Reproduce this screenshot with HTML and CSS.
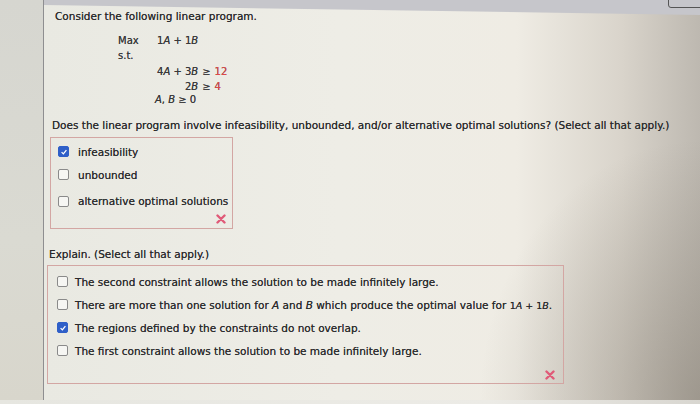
FILE: index.html
```html
<!DOCTYPE html>
<html>
<head>
<meta charset="utf-8">
<link rel="stylesheet" href="styles.css">
</head>
<body>
<div class="screen">
  <div class="side"></div>
  <div class="main">
    <div class="topbar"><div class="tab"></div></div>
    <div class="content">
      <p class="title">Consider the following linear program.</p>
      <div class="lp">
        <div class="lp-row"><span class="lp-label">Max</span><span class="expr">1<i>A</i> + 1<i>B</i></span></div>
        <div class="lp-row"><span class="lp-label">s.t.</span></div>
        <div class="cons">
          <span class="lhs">4<i>A</i> + 3<i>B</i></span><span class="rel">≥</span><span class="rhs">12</span>
          <span class="lhs">2<i>B</i></span><span class="rel">≥</span><span class="rhs">4</span>
        </div>
        <div class="nonneg"><i>A</i>, <i>B</i> ≥ 0</div>
      </div>
      <p class="question">Does the linear program involve infeasibility, unbounded, and/or alternative optimal solutions? (Select all that apply.)</p>
      <div class="box box1">
        <div class="opt"><span class="cb checked"><svg viewBox="0 0 10 10" width="8" height="8"><path d="M2 5.2 L4.2 7.3 L8 2.6" fill="none" stroke="#fff" stroke-width="1.6"/></svg></span><span>infeasibility</span></div>
        <div class="opt"><span class="cb"></span><span>unbounded</span></div>
        <div class="opt"><span class="cb"></span><span>alternative optimal solutions</span></div>
        <div class="mark"><svg viewBox="0 0 10 10" width="10" height="10"><path d="M1.5 1.5 L8.5 8.5 M8.5 1.5 L1.5 8.5" stroke="#e05a78" stroke-width="2.4" stroke-linecap="round"/></svg></div>
      </div>
      <p class="explain">Explain. (Select all that apply.)</p>
      <div class="box box2">
        <div class="opt"><span class="cb"></span><span>The second constraint allows the solution to be made infinitely large.</span></div>
        <div class="opt"><span class="cb"></span><span>There are more than one solution for <i>A</i> and <i>B</i> which produce the optimal value for <span class="sm">1<i>A</i> + 1<i>B</i></span>.</span></div>
        <div class="opt"><span class="cb checked"><svg viewBox="0 0 10 10" width="8" height="8"><path d="M2 5.2 L4.2 7.3 L8 2.6" fill="none" stroke="#fff" stroke-width="1.6"/></svg></span><span>The regions defined by the constraints do not overlap.</span></div>
        <div class="opt"><span class="cb"></span><span>The first constraint allows the solution to be made infinitely large.</span></div>
        <div class="mark"><svg viewBox="0 0 10 10" width="10" height="10"><path d="M1.5 1.5 L8.5 8.5 M8.5 1.5 L1.5 8.5" stroke="#e05a78" stroke-width="2.4" stroke-linecap="round"/></svg></div>
      </div>
    </div>
  </div>
</div>
<div class="bottomstrip"></div>
</body>
</html>
```
FILE: styles.css
```css
html, body {
  margin: 0;
  padding: 0;
  width: 700px;
  height: 404px;
  overflow: hidden;
}
body {
  font-family: "DejaVu Sans", Verdana, sans-serif;
  font-size: 10.5px;
  color: #2a2a2c;
  text-shadow: 0 0 0.6px rgba(40,40,40,0.8);
  background: #e9e8e1;
}
.screen {
  display: flex;
  width: 700px;
  height: 400px;
}
.side {
  width: 43px;
  flex: none;
  background: linear-gradient(180deg, #d6d6d0 0%, #dadad2 60%, #d8d6cc 100%);
  border-right: 1px solid #8e8e90;
}
.main {
  flex: 1;
  display: flex;
  flex-direction: column;
  background:
    radial-gradient(ellipse 220px 260px at 100% 100%, rgba(120,112,100,0.45), rgba(120,112,100,0) 100%),
    linear-gradient(90deg, #e9e9e2 0%, #eeede6 45%, #efece4 72%, #d9d4cb 88%, #bdb8b0 100%);
}
.topbar {
  height: 16px;
  background: #c6c6cb;
  clip-path: polygon(0 0, 100% 0, 100% 15px, 0 5px);
  position: relative;
  flex: none;
}
.tab {
  position: absolute;
  right: -4px;
  top: -4px;
  width: 34px;
  height: 10px;
  border: 1px solid #555;
  border-radius: 3px;
}
.content {
  padding: 0 0 0 11px;
  margin-top: -10px;
}
p { margin: 0; }
.title {
  line-height: 14px;
  margin-top: 3px;
}
.lp {
  margin-left: 63px;
  margin-top: 10px;
  font-size: 10px;
  color: #38383a;
}
.lp-row {
  display: flex;
  height: 15px;
  align-items: center;
}
.lp-label {
  width: 39px;
}
.cons {
  display: grid;
  grid-template-columns: auto auto auto;
  justify-content: start;
  column-gap: 4px;
  margin-left: 39px;
  margin-top: 2px;
  row-gap: 2px;
  line-height: 13px;
}
.lhs { text-align: right; }
.rel { text-align: center; }
.rhs { color: #e04848; }
.nonneg {
  margin-left: 37px;
  line-height: 14px;
}
i { font-style: italic; }
.question {
  margin-top: 11px;
  line-height: 14px;
  margin-left: -3px;
}
.box {
  border: 1px solid #d3a6a3;
  display: flex;
  flex-direction: column;
}
.box1 {
  width: 183px;
  height: 92px;
  margin-left: -5px;
  margin-top: 5px;
  padding: 2px 0 0 7px;
  box-sizing: border-box;
}
.opt {
  display: flex;
  align-items: center;
  height: 23px;
  white-space: nowrap;
}
.box1 .opt:nth-child(3) { height: 26px; padding-top: 2px; }
.cb {
  width: 9px;
  height: 9px;
  border: 1px solid #8a8a8a;
  border-radius: 2px;
  background: #f6f6f3;
  margin-right: 9px;
  display: flex;
  align-items: center;
  justify-content: center;
  flex: none;
}
.cb.checked {
  background: #2f5fc8;
  border-color: #2f5fc8;
}
.mark {
  align-self: flex-end;
  margin-right: 6px;
  margin-top: 0px;
  display: flex;
}
.explain {
  margin-top: 18px;
  margin-left: -6px;
  line-height: 14px;
}
.box2 {
  width: 517px;
  height: 119px;
  margin-left: -8px;
  margin-top: 4px;
  padding: 4px 0 0 9px;
  box-sizing: border-box;
}
.box2 .opt { height: 23px; }
.box2 .cb { margin-right: 7px; }
.box2 .mark { margin-right: 8px; margin-top: 8px; }
.sm { font-size: 9.5px; }
.bottomstrip {
  height: 4px;
  background: linear-gradient(90deg, #e6e6e0, #ecebe6 70%, #d8d6d0);
}
```
